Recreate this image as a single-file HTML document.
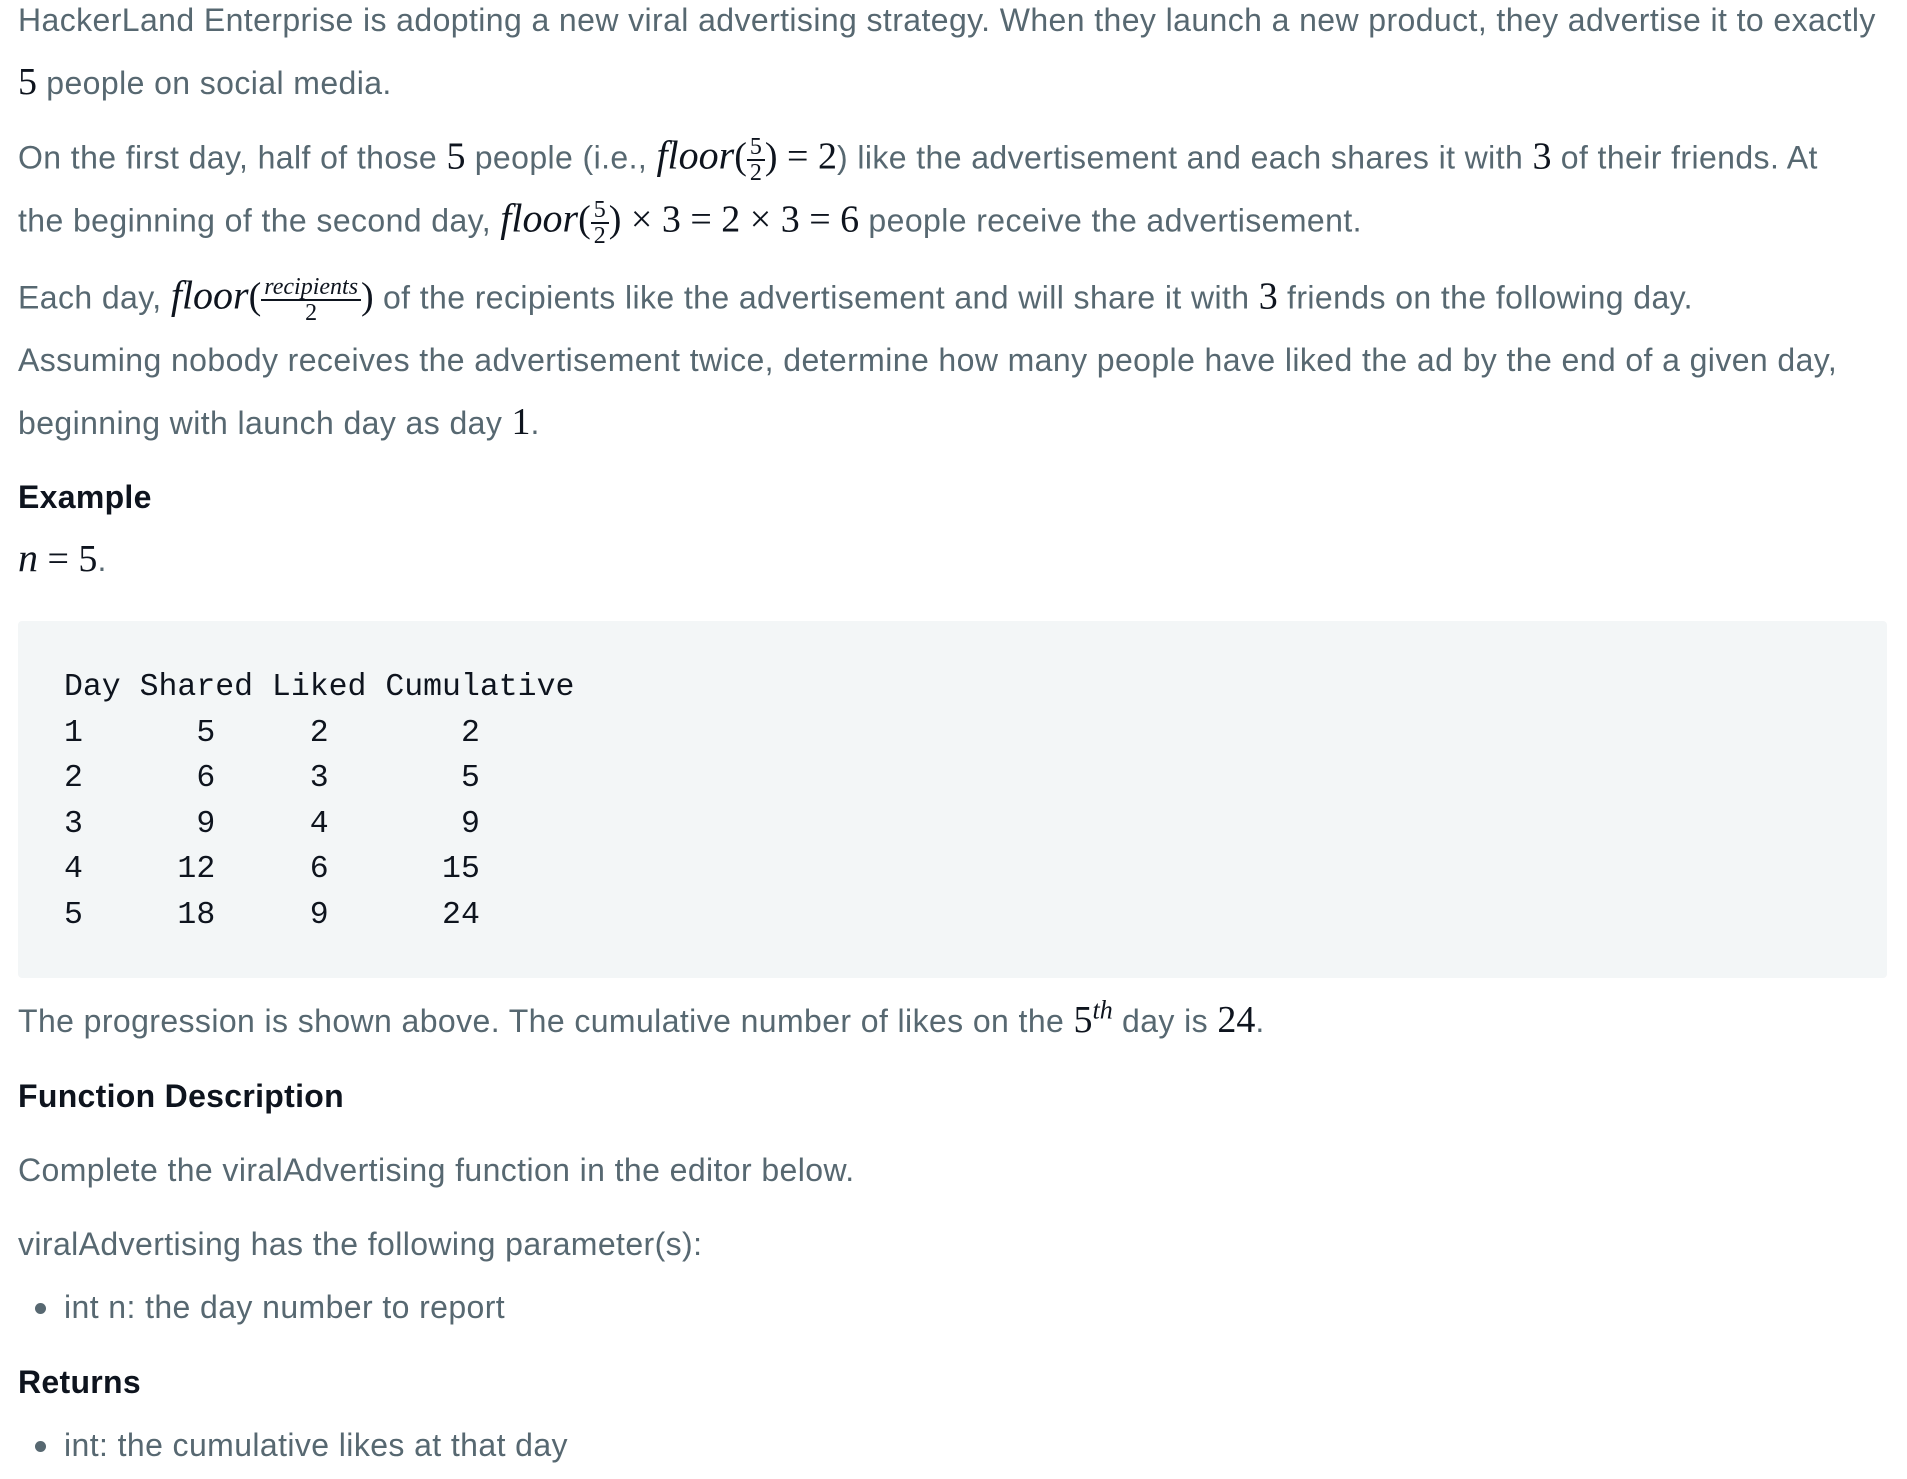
<!DOCTYPE html>
<html><head><meta charset="utf-8"><style>
html,body{margin:0;padding:0;background:#fff;width:1907px;height:1479px;overflow:hidden}
body{position:relative;font-family:"Liberation Sans",sans-serif;color:#576871;font-size:32px}
.l{position:absolute;left:18px;white-space:nowrap;line-height:30px;letter-spacing:0.4px}
.m{font-family:"Liberation Serif",serif;color:#0e141e;font-size:38px;letter-spacing:0}
.mi{font-family:"Liberation Serif",serif;font-style:italic;color:#0e141e;font-size:40px;letter-spacing:0}
.fr{display:inline-block;vertical-align:middle;text-align:center;font-family:"Liberation Serif",serif;color:#0e141e;font-size:24px;line-height:24px;letter-spacing:0}
.fr span{display:block;padding:0 3px}
.fr .t{border-bottom:2px solid #0e141e}
.h{color:#0e141e;font-weight:bold;letter-spacing:0.3px}
.code{position:absolute;left:18px;top:621px;width:1869px;height:357px;background:#f3f6f7;border-radius:4px}
pre{position:absolute;left:64px;top:665px;margin:0;font-family:"Liberation Mono",monospace;font-size:31.5px;line-height:45.5px;color:#0e141e;letter-spacing:0}
.dot{position:absolute;left:35px;width:11px;height:11px;border-radius:50%;background:#576871}
</style></head><body>
<div class="l" style="top:5px">HackerLand Enterprise is adopting a new viral advertising strategy. When they launch a new product, they advertise it to exactly</div>
<div class="l" style="top:67px"><span class="m">5</span> people on social media.</div>
<div class="l" style="top:135px">On the first day, half of those <span class="m">5</span> people (i.e., <span class="mi">floor</span><span class="m">(</span><span class="fr"><span class="t">5</span><span>2</span></span><span class="m">) = 2</span>) like the advertisement and each shares it with <span class="m">3</span> of their friends. At</div>
<div class="l" style="top:198px">the beginning of the second day, <span class="mi">floor</span><span class="m">(</span><span class="fr"><span class="t">5</span><span>2</span></span><span class="m">) × 3 = 2 × 3 = 6</span> people receive the advertisement.</div>
<div class="l" style="top:275px">Each day, <span class="mi">floor</span><span class="m">(</span><span class="fr" style="font-style:italic"><span class="t">recipients</span><span style="font-style:normal">2</span></span><span class="m">)</span> of the recipients like the advertisement and will share it with <span class="m">3</span> friends on the following day.</div>
<div class="l" style="top:345px">Assuming nobody receives the advertisement twice, determine how many people have liked the ad by the end of a given day,</div>
<div class="l" style="top:407px">beginning with launch day as day <span class="m">1</span>.</div>
<div class="l h" style="top:482px">Example</div>
<div class="l" style="top:543px"><span class="mi">n</span><span class="m"> = 5</span>.</div>
<div class="code"></div>
<pre>Day Shared Liked Cumulative
1      5     2       2
2      6     3       5
3      9     4       9
4     12     6      15
5     18     9      24</pre>
<div class="l" style="top:1005px">The progression is shown above. The cumulative number of likes on the <span class="m">5<sup style="font-style:italic;font-size:26px;line-height:0">th</sup></span> day is <span class="m">24</span>.</div>
<div class="l h" style="top:1081px">Function Description</div>
<div class="l" style="top:1155px">Complete the viralAdvertising function in the editor below.</div>
<div class="l" style="top:1229px">viralAdvertising has the following parameter(s):</div>
<div class="dot" style="top:1303px"></div>
<div class="l" style="top:1292px;left:64px">int n: the day number to report</div>
<div class="l h" style="top:1367px">Returns</div>
<div class="dot" style="top:1441px"></div>
<div class="l" style="top:1430px;left:64px">int: the cumulative likes at that day</div>
</body></html>
